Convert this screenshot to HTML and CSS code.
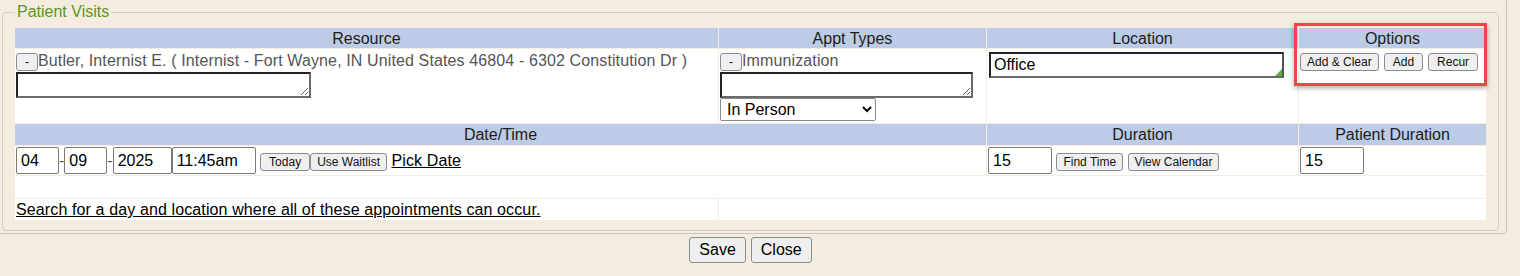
FILE: index.html
```html
<!DOCTYPE html>
<html>
<head>
<meta charset="utf-8">
<title>Patient Visits</title>
<link rel="stylesheet" href="styles.css">
</head>
<body>
<div class="outer">
  <fieldset class="visits">
    <legend>Patient Visits</legend>
    <div class="grid">
      <div class="th">Resource</div>
      <div class="th">Appt Types</div>
      <div class="th">Location</div>
      <div class="th">Options</div>

      <div class="td">
        <div class="line"><button class="btn btn-min">-</button>Butler, Internist E. ( Internist - Fort Wayne, IN United States 46804 - 6302 Constitution Dr )</div>
        <textarea class="ta ta-res"></textarea>
      </div>
      <div class="td">
        <div class="line"><button class="btn btn-min">-</button>Immunization</div>
        <textarea class="ta ta-appt"></textarea>
        <select class="sel"><option>In Person</option></select>
      </div>
      <div class="td td-loc">
        <span class="loc-wrap"><input class="loc" value="Office"></span>
      </div>
      <div class="td td-opts">
        <button class="btn">Add &amp; Clear</button>
        <button class="btn wide">Add</button>
        <button class="btn wide">Recur</button>
      </div>

      <div class="th span2">Date/Time</div>
      <div class="th">Duration</div>
      <div class="th">Patient Duration</div>

      <div class="td span2 row2"><input class="field w43" value="04"><span class="dash">-</span><input class="field w43" value="09"><span class="dash">-</span><input class="field w59" value="2025"><input class="field w84" value="11:45am"> <button class="btn wide">Today</button><button class="btn">Use Waitlist</button> <a href="#" class="link">Pick Date</a></div>
      <div class="td row2"><input class="field w64" value="15"> <button class="btn">Find Time</button> <button class="btn">View Calendar</button></div>
      <div class="td row2"><input class="field w64" value="15"></div>

      <div class="td span4"></div>

      <div class="td row4"><a href="#" class="link">Search for a day and location where all of these appointments can occur.</a></div>
      <div class="td span3"></div>

      <div class="highlight"></div>
    </div>
  </fieldset>
</div>
<div class="actions">
  <button class="btn big">Save</button>
  <button class="btn big">Close</button>
</div>
</body>
</html>
```

FILE: styles.css
```css
html, body {
  margin: 0;
  padding: 0;
  background: #f4eddf;
  font-family: "Liberation Sans", Arial, sans-serif;
  font-size: 16px;
  color: #222;
  overflow: hidden;
}

.outer {
  margin: -10px 13px 0 -6px;
  padding: 12px 7px 2px 7px;
  border: 1px solid #c6c6c6;
  border-radius: 4px;
}

.visits {
  margin: 0;
  padding: 7px 12px 10px 12px;
  border: 1px solid #cdcdcd;
  border-radius: 4px;
  min-width: 0;
}

.visits legend {
  padding: 0 2px;
  line-height: 18px;
  font-size: 16px;
  color: #5f961c;
}

.grid {
  position: relative;
  display: grid;
  grid-template-columns: 703px 267px 311px 187px;
  grid-template-rows: 20px 74px 21px 29px 22px 21px;
  gap: 1px;
}

.th {
  background: #bccbe6;
  text-align: center;
  line-height: 21px;
  color: #1c1c1c;
  white-space: nowrap;
}

.td {
  background: #fff;
  padding-left: 1px;
  white-space: nowrap;
}

.span2 { grid-column: span 2; }
.span3 { grid-column: span 3; }
.span4 { grid-column: span 4; }

.line {
  height: 23px;
  line-height: 23px;
  color: #555;
  letter-spacing: 0.12px;
}

.btn {
  font-family: "Liberation Sans", Arial, sans-serif;
  font-size: 12px;
  line-height: normal;
  letter-spacing: 0;
  color: #111;
  background: #efefef;
  border: 1px solid #8d8d8d;
  border-radius: 3px;
  padding: 1px 6px;
  margin: 0;
}

.btn.wide {
  padding: 1px 8px;
}

.btn-min {
  padding: 1px 8px;
}

.ta {
  display: block;
  box-sizing: border-box;
  height: 26px;
  margin: 0;
  padding: 2px;
  border: 2px solid;
  border-color: #222 #6a6a6a #6a6a6a #222;
  background: #fff;
  font-family: "Liberation Sans", Arial, sans-serif;
  font-size: 16px;
}

.ta-res { width: 295px; }
.ta-appt { width: 253px; }

.sel {
  display: block;
  box-sizing: border-box;
  width: 156px;
  height: 23px;
  margin: 0;
  padding: 0 0 0 2px;
  border: 1px solid #8a8a8a;
  border-radius: 2px;
  background: #fff;
  color: #000;
  font-family: "Liberation Sans", Arial, sans-serif;
  font-size: 16px;
}

.td-loc {
  padding-top: 3px;
}

.loc-wrap {
  position: relative;
  display: inline-block;
  margin-left: 1px;
}

.loc {
  display: block;
  box-sizing: border-box;
  width: 295px;
  height: 26px;
  margin: 0;
  padding: 0 3px;
  border: 2px solid;
  border-color: #222 #555 #6a6a6a #222;
  background: #fff;
  color: #000;
  font-family: "Liberation Sans", Arial, sans-serif;
  font-size: 16px;
  outline: none;
}

.loc-wrap::after {
  content: "";
  position: absolute;
  right: 2px;
  bottom: 2px;
  width: 0;
  height: 0;
  border-left: 7px solid transparent;
  border-bottom: 7px solid #5fae3e;
}

.td-opts {
  display: flex;
  align-items: flex-start;
  gap: 5px;
  padding: 4px 0 0 1px;
}

.row2 {
  padding-top: 1px;
  line-height: normal;
}

.field {
  box-sizing: border-box;
  height: 27px;
  margin: 0;
  padding: 0 4px;
  border: 1px solid #7a7a7a;
  border-radius: 2px;
  background: #fff;
  color: #000;
  font-family: "Liberation Sans", Arial, sans-serif;
  font-size: 16px;
  vertical-align: baseline;
}

.w43 { width: 43px; }
.w59 { width: 59px; }
.w84 { width: 84px; }
.w64 { width: 64px; }

.dash {
  color: #555;
}

.link {
  color: #000;
  text-decoration: underline;
  letter-spacing: 0.12px;
}

.row4 {
  line-height: 21px;
}

.highlight {
  position: absolute;
  left: 1279px;
  top: -5px;
  width: 193px;
  height: 63px;
  box-sizing: border-box;
  border: 3px solid #f2444a;
  box-shadow: 0 2px 5px rgba(0, 0, 0, 0.35);
  pointer-events: none;
}

.actions {
  margin: 3px 13px 0 -6px;
  display: flex;
  justify-content: center;
  gap: 5px;
}

.btn.big {
  font-size: 16px;
  padding: 3px 9px;
  border-radius: 3px;
  color: #000;
}
```
